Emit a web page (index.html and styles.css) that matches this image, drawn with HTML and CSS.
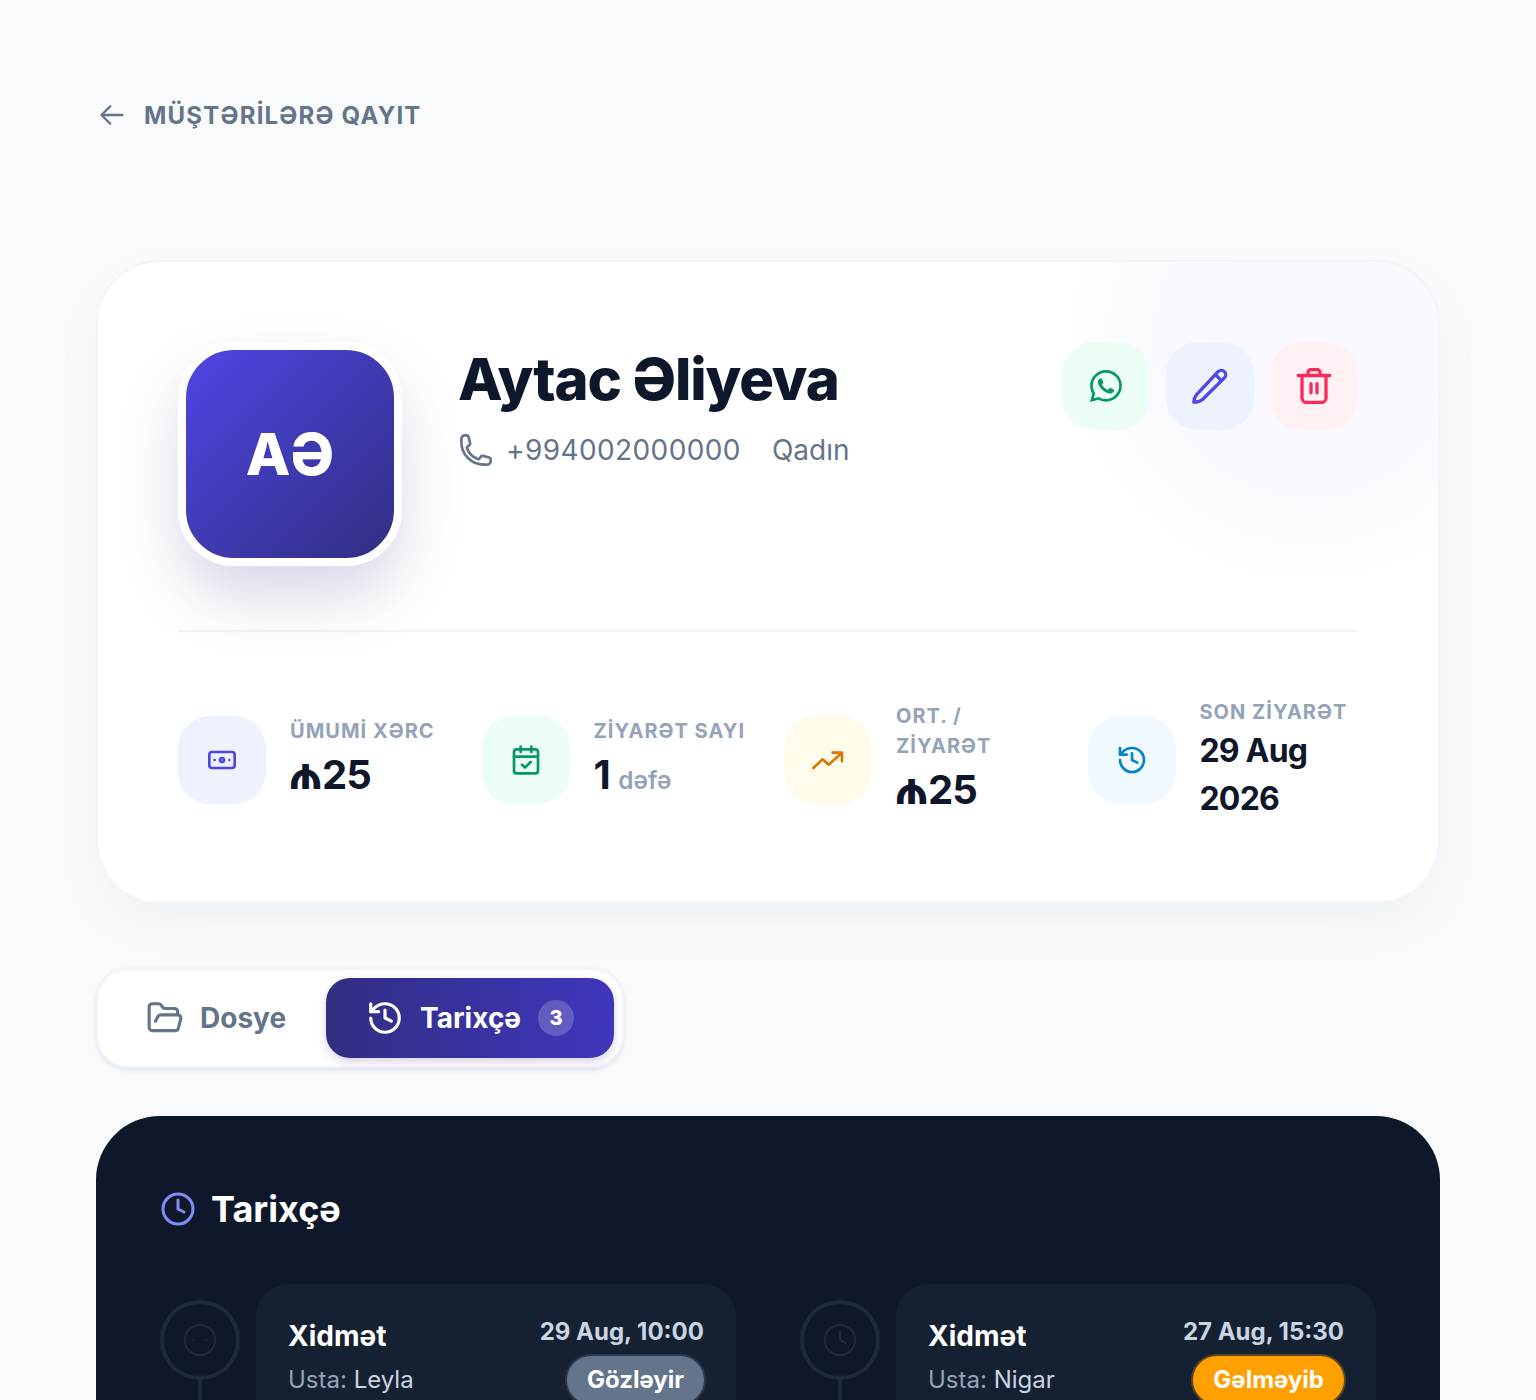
FILE: index.html
```html
<!DOCTYPE html>
<html lang="az">
<head>
    <title>Aytac Əliyeva</title>
    <link rel="stylesheet" href="styles.css">
</head>
<body>
    <div class="page">
        <a class="back-link" href="#">
            <svg class="back-icon" viewBox="0 0 24 24"><path d="M10.5 19.5 3 12l7.500-7.500M3 12h18"/></svg>
            <span>Müştərilərə qayıt</span>
        </a>

        <section class="profile-card">
            <div class="profile-glow"></div>
            <div class="profile-top">
                <div class="avatar"><span>AƏ</span></div>
                <div class="profile-info">
                    <h1>Aytac Əliyeva</h1>
                    <div class="profile-meta">
                        <svg class="phone-icon" viewBox="0 0 24 24"><path d="M2.25 6.75c0 8.284 6.716 15 15 15h2.25a2.25 2.25 0 0 0 2.25-2.25v-1.372c0-.516-.351-.966-.852-1.091l-4.423-1.106c-.44-.11-.902.055-1.173.417l-.97 1.293c-.282.376-.769.542-1.21.38a12.035 12.035 0 0 1-7.143-7.143c-.162-.441.004-.928.38-1.21l1.293-.97c.363-.271.527-.734.417-1.173L6.963 3.102a1.125 1.125 0 0 0-1.091-.852H4.5A2.25 2.25 0 0 0 2.25 4.5v2.25Z"/></svg>
                        <span class="phone">+994002000000</span>
                        <span class="gender">Qadın</span>
                    </div>
                </div>
                <div class="profile-actions">
                    <button class="action action-green">
                        <svg class="icon-fill" viewBox="0 0 16 16"><path d="M13.601 2.326A7.854 7.854 0 0 0 7.994 0C3.627 0 .068 3.558.064 7.926c0 1.399.366 2.76 1.057 3.965L0 16l4.204-1.102a7.933 7.933 0 0 0 3.79.965h.004c4.368 0 7.926-3.558 7.93-7.93A7.898 7.898 0 0 0 13.6 2.326zM7.994 14.521a6.573 6.573 0 0 1-3.356-.92l-.24-.144-2.494.654.666-2.433-.156-.251a6.56 6.56 0 0 1-1.007-3.505c0-3.626 2.957-6.584 6.591-6.584a6.56 6.56 0 0 1 4.66 1.931 6.557 6.557 0 0 1 1.928 4.66c-.004 3.639-2.961 6.592-6.592 6.592zm3.615-4.934c-.197-.099-1.17-.578-1.353-.646-.182-.065-.315-.099-.445.099-.133.197-.513.646-.627.775-.114.133-.232.148-.43.05-.197-.1-.836-.308-1.592-.985-.59-.525-.985-1.175-1.103-1.372-.114-.198-.011-.304.088-.403.087-.088.197-.232.296-.346.1-.114.133-.198.198-.33.065-.134.034-.248-.015-.347-.05-.099-.445-1.076-.612-1.47-.16-.389-.323-.335-.445-.34-.114-.007-.247-.007-.38-.007a.729.729 0 0 0-.529.247c-.182.198-.691.677-.691 1.654 0 .977.71 1.916.81 2.049.098.133 1.394 2.132 3.383 2.992.47.205.84.326 1.129.418.475.152.904.129 1.246.08.38-.058 1.171-.48 1.338-.943.164-.464.164-.86.114-.943-.049-.084-.182-.133-.38-.232z"/></svg>
                    </button>
                    <button class="action action-blue">
                        <svg class="icon-action" viewBox="0 0 24 24"><path d="M1.2 22.8c.2-2 .8-4 2-5.2L17.4 2.4a2.9 2.9 0 0 1 4.2 4.2L7 21c-1.400 1.200-3.600 1.800-5.800 1.800ZM15.600 4.400l4 4"/></svg>
                    </button>
                    <button class="action action-red">
                        <svg class="icon-action" viewBox="0 0 24 24"><path d="M1.500 5h21M8 5V3a2 2 0 0 1 2-2h4a2 2 0 0 1 2 2v2M4 5v15a3 3 0 0 0 3 3h10a3 3 0 0 0 3-3V5M10 10.500v6M14 10.500v6"/></svg>
                    </button>
                </div>
            </div>

            <div class="stats">
                <div class="stat">
                    <div class="stat-icon stat-indigo">
                        <svg viewBox="0 0 24 24"><rect x="2.500" y="6" width="19" height="12" rx="2"/><circle cx="12" cy="12" r="1.500"/><path d="M6.500 12h.01M17.500 12h.01"/></svg>
                    </div>
                    <div class="stat-text">
                        <div class="stat-label">Ümumi xərc</div>
                        <div class="stat-value"><span class="manat">₼</span>25</div>
                    </div>
                </div>
                <div class="stat">
                    <div class="stat-icon stat-green">
                        <svg viewBox="0 0 24 24"><rect x="3" y="4" width="18" height="18" rx="2"/><path d="M3 9.500h18M8 2v4M16 2v4M9 15.500l2.200 2.200L15.500 13.500"/></svg>
                    </div>
                    <div class="stat-text">
                        <div class="stat-label">Ziyarət sayı</div>
                        <div class="stat-value">1 <small>dəfə</small></div>
                    </div>
                </div>
                <div class="stat">
                    <div class="stat-icon stat-amber">
                        <svg viewBox="0 0 24 24"><path d="M1 18l7-6.500 4.500 4L22 7M15.500 6.500H22.500V13"/></svg>
                    </div>
                    <div class="stat-text">
                        <div class="stat-label">Ort. / ziyarət</div>
                        <div class="stat-value"><span class="manat">₼</span>25</div>
                    </div>
                </div>
                <div class="stat">
                    <div class="stat-icon stat-sky">
                        <svg viewBox="0 0 24 24"><path d="M3 12a9 9 0 1 0 9-9 9.750 9.750 0 0 0-6.740 2.740L3 8"/><path d="M3 3v5h5M12 7v5l4 2"/></svg>
                    </div>
                    <div class="stat-text">
                        <div class="stat-label">Son ziyarət</div>
                        <div class="stat-value stat-date">29 Aug 2026</div>
                    </div>
                </div>
            </div>
        </section>

        <nav class="tabs">
            <a class="tab" href="#">
                <svg viewBox="0 0 24 24"><path d="m6 14 1.500-2.900A2 2 0 0 1 9.240 10H20a2 2 0 0 1 1.940 2.500l-1.540 6a2 2 0 0 1-1.950 1.500H4a2 2 0 0 1-2-2V5a2 2 0 0 1 2-2h3.900a2 2 0 0 1 1.690.9l.81 1.200a2 2 0 0 0 1.670.9H18a2 2 0 0 1 2 2v2"/></svg>
                <span>Dosye</span>
            </a>
            <a class="tab tab-active" href="#">
                <svg viewBox="0 0 24 24"><path d="M3 12a9 9 0 1 0 9-9 9.750 9.750 0 0 0-6.740 2.740L3 8"/><path d="M3 3v5h5M12 7v5l4 2"/></svg>
                <span>Tarixçə</span>
                <span class="tab-badge">3</span>
            </a>
        </nav>

        <section class="history">
            <h2>
                <svg viewBox="0 0 24 24"><circle cx="12" cy="12" r="10"/><path d="M12 6v6l4 2"/></svg>
                Tarixçə
            </h2>
            <div class="timeline">
                <div class="visit">
                    <div class="visit-rail">
                        <div class="visit-marker">
                            <svg viewBox="0 0 24 24"><circle cx="12" cy="12" r="10"/><path d="M7.500 12h.01M12 12h.01M16.500 12h.01"/></svg>
                        </div>
                        <div class="visit-line"></div>
                    </div>
                    <div class="visit-card">
                        <div class="visit-left">
                            <div class="visit-title">Xidmət</div>
                            <div class="visit-master">Usta: <span>Leyla</span></div>
                        </div>
                        <div class="visit-right">
                            <div class="visit-date">29 Aug, 10:00</div>
                            <span class="status status-pending">Gözləyir</span>
                        </div>
                    </div>
                </div>
                <div class="visit">
                    <div class="visit-rail">
                        <div class="visit-marker">
                            <svg viewBox="0 0 24 24"><circle cx="12" cy="12" r="10"/><path d="M12 6v6l4 2"/></svg>
                        </div>
                        <div class="visit-line"></div>
                    </div>
                    <div class="visit-card">
                        <div class="visit-left">
                            <div class="visit-title">Xidmət</div>
                            <div class="visit-master">Usta: <span>Nigar</span></div>
                        </div>
                        <div class="visit-right">
                            <div class="visit-date">27 Aug, 15:30</div>
                            <span class="status status-noshow">Gəlməyib</span>
                        </div>
                    </div>
                </div>
            </div>
        </section>
    </div>
</body>
</html>
```

FILE: styles.css
```css
* { box-sizing: border-box; }
html, body { margin: 0; padding: 0; }
body { background: #f8fafc; font-family: Inter, "Noto Sans", sans-serif; color: #0f172a; }
svg { fill: none; stroke: currentColor; stroke-linecap: round; stroke-linejoin: round; stroke-width: 2; display: block; }
a { text-decoration: none; color: inherit; }
button { border: none; padding: 0; cursor: pointer; font: inherit; }

.page { height: 1400px; overflow: hidden; padding: 96px 96px 0; }

.back-link { display: flex; align-items: center; gap: 18px; height: 38px; margin-bottom: 126px; color: #64748b; font-size: 24px; font-weight: 700; letter-spacing: 0.05em; text-transform: uppercase; }
.back-icon { width: 28px; height: 28px; margin-left: 2px; stroke-width: 2; }

.profile-card { position: relative; overflow: hidden; height: 644px; padding: 80px; background: #fff; border: 2px solid #f1f5f9; border-radius: 64px; box-shadow: 0 20px 50px -12px rgba(148, 163, 184, .12); }
.profile-glow { position: absolute; top: -162px; right: -112px; width: 480px; height: 480px; border-radius: 50%; background: radial-gradient(circle, rgba(79, 70, 229, .045) 0%, rgba(79, 70, 229, .035) 45%, rgba(79, 70, 229, 0) 72%); }
.profile-top { position: relative; display: flex; gap: 56px; padding-bottom: 64px; border-bottom: 2px solid #f1f5f9; }

.avatar { flex: none; display: flex; align-items: center; justify-content: center; width: 224px; height: 224px; border: 8px solid #fff; border-radius: 56px; background: linear-gradient(135deg, #4f46e5, #312e81); box-shadow: 0 32px 64px -4px rgba(49, 46, 129, .2); color: #fff; font-size: 58px; font-weight: 800; }

.profile-info { flex: 1; padding-top: 1px; }
.profile-info h1 { margin: 0; font-size: 58px; line-height: 72px; font-weight: 800; letter-spacing: -0.02em; color: #0f172a; }
.profile-meta { display: flex; align-items: center; margin-top: 17px; color: #64748b; font-size: 28px; }
.phone-icon { width: 36px; height: 36px; margin-right: 12px; stroke-width: 1.8; }
.phone { margin-right: 31px; letter-spacing: 0.4px; }

.profile-actions { display: flex; gap: 16px; }
.action { display: flex; align-items: center; justify-content: center; width: 88px; height: 88px; border-radius: 32px; }
.action-green { background: #ecfdf5; color: #059669; }
.action-blue { background: #eef2ff; color: #4f46e5; }
.action-red { background: #fff1f2; color: #f62a5e; }
.icon-fill { width: 32px; height: 32px; fill: currentColor; stroke: none; }
.icon-action { width: 36px; height: 36px; stroke-width: 2.2; }

.stats { display: grid; grid-template-columns: 271.5px 270.5px 271.5px 270.5px; gap: 32px; margin-top: 65px; }
.stat { display: flex; align-items: center; gap: 24px; }
.stat-icon { flex: none; display: flex; align-items: center; justify-content: center; width: 88px; height: 88px; border-radius: 32px; }
.stat-icon svg { width: 32px; height: 32px; }
.stat-indigo { background: #eef2ff; color: #4f46e5; }
.stat-green { background: #ecfdf5; color: #059669; }
.stat-amber { background: #fffbeb; color: #d97706; }
.stat-sky { background: #f0f9ff; color: #0284c7; }
.stat-label { font-size: 20px; line-height: 30px; font-weight: 700; letter-spacing: 0.05em; text-transform: uppercase; color: #94a3b8; }
.stat-value { font-size: 40px; line-height: 58px; font-weight: 700; letter-spacing: -0.025em; color: #0f172a; }
.stat-date { font-size: 32px; line-height: 48px; }
.stat-value small { font-size: 24.5px; line-height: 1; font-weight: 600; letter-spacing: 0; color: #94a3b8; }
.manat { margin-left: -2px; font-size: 46px; line-height: 1; }

.tabs { display: inline-flex; margin-top: 64px; padding: 8px; background: #fff; border: 2px solid #f1f5f9; border-radius: 32px; box-shadow: 0 2px 4px rgba(148, 163, 184, .25); vertical-align: top; }
.tab { display: flex; align-items: center; gap: 16px; height: 80px; padding: 0 40px; border-radius: 24px; color: #64748b; font-size: 28px; font-weight: 700; }
.tab svg { width: 38px; height: 38px; }
.tab-active { background: linear-gradient(90deg, #312e81, #3f36bd); color: #fff; box-shadow: 0 4px 10px rgba(49, 46, 129, .2); }
.tab-badge { display: flex; align-items: center; justify-content: center; width: 36px; height: 36px; margin-left: 1px; border-radius: 50%; background: rgba(255, 255, 255, .2); font-size: 20px; font-weight: 800; }

.history { margin-top: 48px; padding: 64px; min-height: 400px; background: #0f172a; border-radius: 64px; color: #fff; }
.history h2 { display: flex; align-items: center; gap: 15px; height: 58px; margin: 0 0 46px; font-size: 36px; font-weight: 700; }
.history h2 svg { width: 36px; height: 36px; color: #818cf8; }

.timeline { display: grid; grid-template-columns: 1fr 1fr; gap: 64px; }
.visit { display: flex; gap: 16px; }
.visit-rail { flex: none; display: flex; flex-direction: column; align-items: center; width: 80px; padding-top: 16px; }
.visit-marker { display: flex; align-items: center; justify-content: center; width: 80px; height: 80px; border: 4px solid #1e293b; border-radius: 50%; color: #1e293b; }
.visit-marker svg { width: 36px; height: 36px; stroke-width: 1.5; }
.visit-line { flex: 1; width: 4px; background: #1e293b; }

.visit-card { flex: 1; display: flex; justify-content: space-between; padding: 32px; background: rgba(30, 41, 59, .5); border-radius: 32px; }
.visit-title { font-size: 28px; line-height: 40px; font-weight: 700; }
.visit-master { margin-top: 5px; font-size: 24px; line-height: 38px; color: #94a3b8; }
.visit-master span { color: #cbd5e1; }
.visit-right { display: flex; flex-direction: column; align-items: flex-end; }
.visit-date { font-size: 24px; line-height: 32px; font-weight: 700; color: #cbd5e1; margin-bottom: 8px; }
.status { display: block; padding: 0 20px; height: 48px; line-height: 48px; border-radius: 24px; font-size: 24px; font-weight: 700; color: #fff; }
.status-pending { background: #64748b; box-shadow: 0 0 0 2px rgba(100, 116, 139, .3); }
.status-noshow { background: #ff9f00; box-shadow: 0 0 0 2px rgba(245, 158, 11, .3); }
```
